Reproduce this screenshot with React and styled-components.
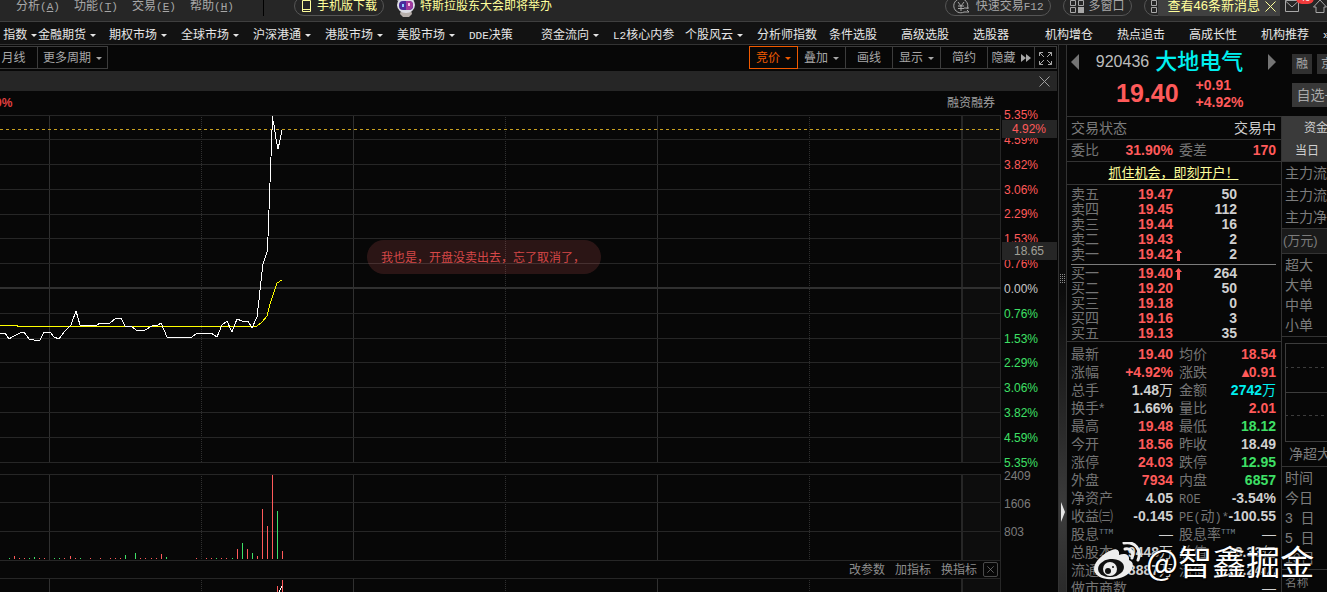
import { useState } from "react";
import styled, { createGlobalStyle } from "styled-components";

const GlobalStyle = createGlobalStyle`
  * {
    box-sizing: border-box;
  }
  body {
    margin: 0;
    background: #070707;
    color: #c8c8c8;
    font-family: "Liberation Sans", "Noto Sans CJK SC", sans-serif;
    font-size: 12px;
    line-height: 14px;
    overflow: hidden;
  }
  button {
    font: inherit;
    color: inherit;
    background: none;
    border: none;
    padding: 0;
    cursor: pointer;
    white-space: nowrap;
  }
  a {
    color: inherit;
    text-decoration: none;
  }
  svg {
    display: block;
    flex: none;
  }
`;

const red = "#ff5a5a";
const green = "#3ee066";
const cyan = "#00f0f0";
const line = "#333333";

const Page = styled.div`
  height: 100vh;
  display: flex;
  flex-direction: column;
  overflow: hidden;
`;

/* top menu */

const TopBar = styled.header`
  flex: none;
  height: 22px;
  display: flex;
  align-items: flex-end;
  justify-content: space-between;
  padding-bottom: 5px;
  background: #262626;
  border-bottom: 1px solid #3f3f3f;
  overflow: hidden;
`;

const TopGroup = styled.div`
  display: flex;
  align-items: center;
  height: 20px;
`;

const MenuButton = styled.button`
  width: 58px;
  height: 18px;
  padding-left: 16px;
  text-align: left;
  color: #a8a8a8;
`;

const Latin = styled.span`
  font-family: "Liberation Mono", monospace;
  font-size: ${(p) => p.$size || 11}px;
  line-height: 0;
`;

const MenuLine = styled.span`
  width: 1px;
  height: 20px;
  margin: 0 30px 0 31px;
  background: #000;
`;

const Pill = styled.button`
  height: 20px;
  display: flex;
  align-items: center;
  gap: 5px;
  padding: 0 6px;
  margin-right: 12px;
  border: 1px solid #555;
  border-radius: 10px;
  color: ${(p) => (p.$hot ? "#ffff9c" : "#a8a8a8")};
`;

const NewsLink = styled.a`
  display: flex;
  align-items: center;
  gap: 4px;
  color: #ffff9c;
`;

const Notice = styled.div`
  height: 20px;
  display: flex;
  align-items: center;
  gap: 5px;
  padding: 0 4px 0 10px;
  margin-left: -26px;
  background: #404040;
  color: #ffff9c;
  font-size: 13px;
  white-space: nowrap;
  z-index: 1;
`;

const IconButton = styled.button`
  position: relative;
  margin-left: ${(p) => p.$gap || 0}px;
`;

const Badge = styled.span`
  position: absolute;
  left: 11px;
  top: -8px;
  padding: 0 4px;
  border-radius: 6px;
  background: #f03c3c;
  color: #fff;
  font-size: 9px;
  line-height: 12px;
`;

/* navigation */

const Nav = styled.nav`
  flex: none;
  height: 23px;
  display: flex;
  align-items: center;
  padding-top: 4px;
  background: #121212;
  border-bottom: 1px solid ${line};
  color: #e6e6e6;
  overflow: hidden;
`;

const NavItem = styled.a`
  flex: none;
  width: ${(p) => p.$width || 72}px;
  display: flex;
  align-items: center;
  gap: 4px;
  white-space: nowrap;
`;

const Caret = styled.span`
  border: 3px solid transparent;
  border-top-color: currentColor;
  border-bottom: none;
`;

/* body */

const Body = styled.div`
  flex: 1;
  min-height: 0;
  display: flex;
`;

const Main = styled.main`
  flex: 1;
  min-width: 0;
  display: flex;
  flex-direction: column;
`;

const Toolbar = styled.div`
  flex: none;
  display: flex;
  justify-content: space-between;
  padding: 1px 0 2px;
`;

const ToolGroup = styled.div`
  display: flex;
`;

const Tool = styled.button`
  width: ${(p) => p.$width || 47}px;
  height: 23px;
  display: flex;
  align-items: center;
  justify-content: center;
  gap: 5px;
  padding-top: 1px;
  border: 1px solid ${(p) => (p.$active ? "#f05a00" : "#3c3c3c")};
  border-left-width: ${(p) => (p.$active ? 1 : 0)}px;
  color: ${(p) => (p.$active ? "#f05a00" : "#a8a8a8")};
`;

const Band = styled.div`
  flex: none;
  height: 20px;
  display: flex;
  align-items: center;
  justify-content: flex-end;
  padding-right: 7px;
  background: #262626;
  color: #a0a0a0;
`;

const Legend = styled.div`
  flex: none;
  height: 24px;
  display: flex;
  align-items: center;
  justify-content: space-between;
  padding-right: 62px;
  color: #a0a0a0;
`;

const Change = styled.span`
  margin-left: -5px;
  font-weight: bold;
  color: #e04040;
`;

const ChartRow = styled.section`
  flex: none;
  display: grid;
  grid-template-columns: 1fr 56px;
  margin-bottom: ${(p) => p.$gap || 0}px;
  position: relative;
`;

const Plot = styled.svg`
  width: 100%;
  height: ${(p) => p.$height}px;
  shape-rendering: crispEdges;
`;

const Axis = styled.div`
  display: flex;
  flex-direction: column;
  justify-content: space-between;
  margin: -7px 0;
  padding-left: 3px;
`;

const VolumeAxis = styled(Axis)`
  justify-content: flex-start;
  gap: 14px;
  margin: -5px 0 0;
  color: #7c7c7c;
`;

const Tick = styled.span`
  color: ${(p) => p.$color};
`;

const AxisTag = styled.span`
  position: absolute;
  right: 0;
  top: ${(p) => p.$top}px;
  width: 55px;
  padding-left: ${(p) => p.$indent}px;
  line-height: 18px;
  background: #262626;
  color: ${(p) => p.$color};
`;

const Comment = styled.div`
  position: absolute;
  left: 367px;
  top: 125px;
  padding: 11px 14px 9px;
  width: 234px;
  border-radius: 17px;
  background: rgba(255, 110, 110, 0.15);
  color: #d64848;
  white-space: nowrap;
`;

const IndicatorBar = styled.div`
  flex: none;
  height: 17px;
  display: flex;
  align-items: center;
  justify-content: flex-end;
  gap: 10px;
  margin-right: 56px;
  padding-right: 2px;
  border-right: 1px solid #262626;
  color: #8c8c8c;
`;

const Box = styled.button`
  width: 15px;
  height: 15px;
  display: grid;
  place-items: center;
  margin-left: -4px;
  border: 1px solid #4a4a4a;
  border-radius: 2px;
`;

/* splitter between chart and quotes */

const Splitter = styled.div`
  flex: none;
  width: 9px;
  margin-left: 1px;
  padding-top: 229px;
  display: flex;
  flex-direction: column;
  align-items: center;
  gap: 219px;
  border: solid ${line};
  border-width: 0 1px;
  color: #8c8c8c;
  background: linear-gradient(#0c0c0c 45%, #3c3c3c 85%, #2a2a2a);
`;

const SplitArrow = styled.span`
  border: 10px solid transparent;
  border-left: 4px solid #e6e6e6;
  border-right: none;
`;

const Side = styled.aside`
  flex: none;
  width: 260px;
  display: flex;
  flex-direction: column;
  position: relative;
  overflow: hidden;
`;

const StockHead = styled.div`
  flex: none;
  height: 71px;
  display: flex;
  padding-left: 4px;
`;

const StockInfo = styled.div`
  flex: none;
  width: 205px;
  padding-top: 4px;
`;

const StockTitle = styled.div`
  height: 26px;
  display: flex;
  align-items: center;
  justify-content: space-between;
  color: #747474;
`;

const Name = styled.h1`
  margin: 0;
  padding-right: 8px;
  display: flex;
  align-items: center;
  gap: 6px;
  color: ${cyan};
  font-size: 22px;
  font-weight: 500;
  line-height: 26px;
`;

const Code = styled.span`
  color: #bdbdbd;
  font-size: 16px;
  font-weight: normal;
`;

const PriceRow = styled.div`
  display: flex;
  align-items: center;
  gap: 17px;
  padding-left: 45px;
  color: ${red};
`;

const Price = styled.strong`
  font-size: 25px;
  font-weight: bold;
  line-height: 28px;
`;

const Delta = styled.div`
  padding-top: 2px;
  font-size: 14px;
  font-weight: bold;
  line-height: 17px;
`;

const Tags = styled.div`
  display: grid;
  grid-template-columns: 20px 20px;
  gap: 9px 5px;
  align-content: start;
  padding: 9px 0 0 16px;
`;

const Tag = styled.button`
  height: 20px;
  background: #303030;
  color: #a8a8a8;
`;

const WatchButton = styled(Tag)`
  grid-column: span 2;
  height: 24px;
  background: #383838;
  font-size: 14px;
`;

const Panels = styled.div`
  flex: 1;
  display: flex;
  align-items: stretch;
`;

const Quote = styled.section`
  flex: none;
  width: 214px;
  border-top: 1px solid ${line};
`;

const StatusRow = styled.div`
  display: flex;
  align-items: center;
  justify-content: space-between;
  height: 23px;
  padding: 0 5px 0 4px;
  border-bottom: 1px solid ${line};
  color: #7c7c7c;
  font-size: 14px;
`;

const State = styled.span`
  color: #d0d0d0;
`;

const RatioRow = styled.div`
  border-bottom: 1px solid ${line};
`;

const Promo = styled.a`
  margin: 0 auto;
  color: #ffff9c;
  font-size: 13px;
  text-decoration: underline;
  text-underline-offset: 2px;
`;

const Num = styled.span`
  color: ${(p) => p.$color || "#d0d0d0"};
  font-weight: bold;
`;

const Unit = styled.span`
  font-weight: normal;
`;

const QuoteTable = styled.table`
  width: 205px;
  margin-left: 4px;
  table-layout: fixed;
  border-collapse: collapse;
  font-size: 14px;

  th,
  td {
    height: ${(p) => p.$row}px;
    line-height: ${(p) => p.$row}px;
    padding: 0;
    white-space: nowrap;
    text-align: right;
  }
  th {
    color: #747474;
    font-weight: normal;
    text-align: left;
  }
  td svg {
    margin-left: 2px;
  }
  th + td + th {
    padding-left: 6px;
  }
`;

const Book = styled.div`
  padding: 2px 0 0;
  border-bottom: 1px solid ${line};
`;

const BookLine = styled.hr`
  margin: 2px 5px 1px 4px;
  border: none;
  border-top: 1px solid #7c7c7c;
`;

const Details = styled.div`
  padding-top: 3px;
`;

const Ttm = styled.sup`
  position: relative;
  top: -5px;
  color: #6f8090;
  font-family: "Liberation Mono", monospace;
  font-size: 8px;
  line-height: 0;
  vertical-align: baseline;
`;

const Fund = styled.section`
  flex: 1;
  min-width: 0;
  border-left: 1px solid ${line};
  color: #7c7c7c;
  font-size: 14px;
  overflow: hidden;
  white-space: nowrap;
`;

const FundTabs = styled.div`
  display: grid;
  grid-template-rows: 24px 21px;
  justify-items: start;
  background: #3a3a3a;
  color: #d0d0d0;
  font-size: 12px;
`;

const FundTab = styled.button`
  margin-left: ${(p) => p.$indent}px;
`;

const FundList = styled.div`
  padding: ${(p) => p.$pad || 0}px 0 ${(p) => p.$pad || 0}px 3px;
  line-height: ${(p) => p.$row || 20}px;
  border-top: 1px solid ${line};
`;

const FundUnit = styled.div`
  padding-left: 1px;
  line-height: 24px;
  font-size: 13px;
  background: #1a1a1a;
  border-top: 1px solid ${line};
`;

const MiniChart = styled.svg`
  margin-top: 6px;
  shape-rendering: crispEdges;
`;

const FundCaption = styled.div`
  padding-left: 7px;
  line-height: 24px;
`;

const Watermark = styled.div`
  position: absolute;
  left: 27px;
  top: 494px;
  display: flex;
  align-items: center;
  gap: 5px;
  color: #fff;
  font-family: "Noto Sans CJK SC", sans-serif;
  font-size: 34px;
  line-height: 44px;
  text-shadow: 0 0 2px #000, 1px 1px 1px #000;
  white-space: nowrap;
`;

const Cross = ({ size = 11 }) => (
  <svg width={size} height={size} viewBox="0 0 11 11" stroke="currentColor">
    <path d="M.5.5l10 10M10.5.5l-10 10" />
  </svg>
);

const UpArrow = () => (
  <svg width="7" height="12" viewBox="0 0 7 12" fill={red}>
    <path d="M3.5 0L7 4H5v8H2V4H0z" />
  </svg>
);

const Grid4 = () => (
  <svg width="14" height="13" viewBox="0 0 14 13" fill="none" stroke="currentColor">
    <path d="M.5.5h5v5h-5zM8.5.5h5v5h-5zM.5 7.5h5v5h-5z" />
    <path d="M8 7h6v6H8z" fill="currentColor" stroke="none" />
  </svg>
);

const Robot = () => (
  <svg width="20" height="22" viewBox="0 0 20 22">
    <path d="M3 8L1 5l3-2 4 1 6-2 4 2-1 4z" fill="#a9a9b4" />
    <path d="M5 15h10l1 4-3 3H7l-3-3z" fill="#b8b0ac" />
    <ellipse cx="10" cy="10" rx="9" ry="8" fill="#dedee6" />
    <rect x="3" y="6" width="14" height="9" rx="4" fill="#4a2c9c" />
    <path d="M10 6h3q4 0 4 4t-4 5h-3z" fill="#a03a9c" />
    <rect x="6" y="9" width="2" height="3" fill="#8fd0ff" />
    <rect x="12" y="8" width="2" height="3" fill="#ffc0e8" />
  </svg>
);

const navItems = [
  ["金融期货", true, 71],
  ["期权市场", true],
  ["全球市场", true],
  ["沪深港通", true],
  ["港股市场", true],
  ["美股市场", true],
  ["决策", false, 72, "DDE"],
  ["资金流向", true],
  ["核心内参", false, 72, "L2"],
  ["个股风云", true],
  ["分析师指数"],
  ["条件选股"],
  ["高级选股"],
  ["选股器"],
  ["机构增仓"],
  ["热点追击"],
  ["高成长性"],
  ["机构推荐", false, 62],
  ["»"],
];

const ticks = [5.35, 4.59, 3.82, 3.06, 2.29, 1.53, 0.76, 0, -0.76, -1.53, -2.29, -3.06, -3.82, -4.59, -5.35];
const gridY = [0, 24, 49, 74, 99, 123, 148, 198, 223, 247, 272, 297, 322, 347];

const priceLine =
  "0,218 5,218 9,224 14,221 20,218 24,217 29,224 34,225 40,225 44,217 50,217 54,222 59,224 65,216 71,210 76,196 80,210 97,210 100,208 110,208 116,203 121,203 125,211 131,211 136,215 145,215 152,211 158,210 161,208 167,222 192,222 197,218 211,218 217,222 222,210 227,206 232,217 237,204 242,206 248,206 252,213 257,202 259,185 261,166 263,149 267,137 268,122 269,95 270,68 271,42 272,15 272,1 274,10 276,24 278,34 280,25 282,15";
const averageLine = "0,210 17,210 17,211 257,211 262,207 267,201 270,189 274,177 277,168 282,165";

// [x, height, rising]
const volumes = [
  [9, 1, 0], [14, 3, 1], [19, 1, 1], [24, 1, 1], [29, 1, 0], [34, 2, 0], [39, 1, 1], [44, 1, 1],
  [54, 1, 0], [59, 1, 0], [64, 1, 1], [70, 3, 1], [75, 1, 1], [80, 1, 0], [90, 1, 1], [100, 1, 1],
  [110, 1, 1], [115, 1, 1], [120, 1, 1], [125, 4, 0], [135, 6, 0], [140, 1, 1], [145, 1, 1], [151, 1, 1],
  [156, 1, 1], [161, 5, 1], [166, 2, 0], [196, 1, 1], [206, 1, 1], [211, 1, 1], [216, 1, 0], [221, 1, 1],
  [226, 1, 1], [232, 1, 0], [237, 10, 1], [242, 16, 0], [247, 10, 1], [252, 6, 0], [257, 3, 1],
  [262, 50, 1], [267, 33, 1], [272, 84, 1], [277, 48, 0], [282, 8, 1],
];

const sells = [
  ["卖五", "19.47", 50],
  ["卖四", "19.45", 112],
  ["卖三", "19.44", 16],
  ["卖二", "19.43", 2],
  ["卖一", "19.42", 2, true],
];
const buys = [
  ["买一", "19.40", 264, true],
  ["买二", "19.20", 50],
  ["买三", "19.18", 0],
  ["买四", "19.16", 3],
  ["买五", "19.13", 35],
];

const ttm = <Ttm>TTM</Ttm>;
const dash = <Unit>—</Unit>;
const ratio = [["委比", "31.90%", red, "委差", "170", red]];
const details = [
  ["最新", "19.40", red, "均价", "18.54", red],
  ["涨幅", "+4.92%", red, "涨跌", "▴0.91", red],
  ["总手", <>1.48<Unit>万</Unit></>, null, "金额", <>2742<Unit>万</Unit></>, cyan],
  ["换手*", "1.66%", null, "量比", "2.01", red],
  ["最高", "19.48", red, "最低", "18.12", green],
  ["今开", "18.56", red, "昨收", "18.49", null],
  ["涨停", "24.03", red, "跌停", "12.95", green],
  ["外盘", "7934", red, "内盘", "6857", green],
  ["净资产", "4.05", null, <Latin $size={12}>ROE</Latin>, "-3.54%", null],
  [
    "收益㈢", "-0.145", null,
    <><Latin $size={12}>PE(</Latin>动<Latin $size={12}>)*</Latin></>, "-100.55", null,
  ],
  [<>股息{ttm}</>, dash, null, <>股息率{ttm}</>, dash, null],
  ["总股本", <>9448<Unit>万</Unit></>, null, "总值", <>18.33<Unit>亿</Unit></>, null],
  ["流通股", <>8887<Unit>万</Unit></>, null, "流值", <>17.24<Unit>亿</Unit></>, null],
  ["做市商数", "", null, "", dash, null],
];

const Verticals = ({ height }) => (
  <>
    <rect x="962" width="39" height={height} fill="#0d0d0d" />
    {[49, 353, 657].map((x) => (
      <rect key={x} x={x} width="1" height={height} fill="#303030" />
    ))}
    {[201, 505, 809].map((x) => (
      <path key={x} d={`M${x}.5 0V${height}`} stroke="#303030" strokeDasharray="1 1" />
    ))}
    <rect x="961" width="2" height={height} fill="#262626" />
    <rect x="1000" width="1" height={height} fill="#262626" />
  </>
);

const BookTable = ({ rows }) => (
  <QuoteTable $row={15}>
    <colgroup>
      <col width="62" />
      <col width="40" />
      <col width="10" />
      <col width="54" />
      <col width="39" />
    </colgroup>
    <tbody>
      {rows.map(([label, price, amount, up]) => (
        <tr key={label}>
          <th scope="row">{label}</th>
          <td><Num $color={red}>{price}</Num></td>
          <td>{up && <UpArrow />}</td>
          <td><Num>{amount}</Num></td>
          <td />
        </tr>
      ))}
    </tbody>
  </QuoteTable>
);

const PairTable = ({ rows, row }) => (
  <QuoteTable $row={row}>
    <colgroup>
      <col width="48" />
      <col width="54" />
      <col width="51" />
      <col width="52" />
    </colgroup>
    <tbody>
      {rows.map(([l1, v1, c1, l2, v2, c2], i) => (
        <tr key={i}>
          <th scope="row">{l1}</th>
          <td><Num $color={c1}>{v1}</Num></td>
          <th scope="row">{l2}</th>
          <td><Num $color={c2}>{v2}</Num></td>
        </tr>
      ))}
    </tbody>
  </QuoteTable>
);

const App = () => {
  const [notice, setNotice] = useState(true);

  return (
    <Page>
      <GlobalStyle />
      <TopBar>
        <TopGroup>
          {[["分析", "A"], ["功能", "T"], ["交易", "E"], ["帮助", "H"]].map(([text, key]) => (
            <MenuButton key={key}>
              {text}<Latin>(<u>{key}</u>)</Latin>
            </MenuButton>
          ))}
          <MenuLine />
          <Pill $hot>
            <svg width="11" height="12" viewBox="0 0 11 12" fill="none" stroke="currentColor">
              <path d="M1.500.5h8v11h-8zM1.500 9.500h8" />
            </svg>
            手机版下载
          </Pill>
          <NewsLink href="#news">
            <Robot />
            特斯拉股东大会即将举办
          </NewsLink>
        </TopGroup>
        <TopGroup>
          <Pill>
            <svg width="19" height="16" viewBox="0 0 19 16" fill="none" stroke="currentColor">
              <path d="M12 14a7 7 0 1 1 3-3M6 4l3 4 3-4M6 8h6M6 10.500h6M9 8v5M12 14h5l-2-2M17 10h-5" />
            </svg>
            <span>快速交易<Latin>F12</Latin></span>
          </Pill>
          <Pill><Grid4 />多窗口</Pill>
          <Pill aria-label="布局"><Grid4 /></Pill>
          {notice && (
            <Notice>
              查看46条新消息
              <IconButton aria-label="关闭" onClick={() => setNotice(false)}><Cross /></IconButton>
            </Notice>
          )}
          <IconButton $gap={5} aria-label="消息">
            <svg width="14" height="12" viewBox="0 0 14 12" fill="none" stroke="#a8a8a8">
              <path d="M.5.5h13v11H.5zM.5 1L7 7l6.500-6" />
            </svg>
            <Badge>46</Badge>
          </IconButton>
          <IconButton $gap={14} aria-label="主页">
            <svg width="14" height="14" viewBox="0 0 14 14" fill="none" stroke="#a8a8a8">
              <path d="M.5 8L7 1l6.500 7H11v5.500H3V8z" />
            </svg>
          </IconButton>
        </TopGroup>
      </TopBar>

      <Nav>
        <NavItem href="#" $width={38}>
          <span>&nbsp;指数</span><Caret />
        </NavItem>
        {navItems.map(([text, menu, width, latin]) => (
          <NavItem href="#" key={text} $width={width}>
            <span>{latin && <Latin>{latin}</Latin>}{text}</span>
            {menu && <Caret />}
          </NavItem>
        ))}
      </Nav>

      <Body>
        <Main>
          <Toolbar>
            <ToolGroup>
              <Tool $width={38}>月线&nbsp;&nbsp;&nbsp;</Tool>
              <Tool $width={70}>更多周期 <Caret /></Tool>
            </ToolGroup>
            <ToolGroup>
              <Tool $active $width={49}>竞价<Caret /></Tool>
              <Tool $width={48}>叠加<Caret /></Tool>
              <Tool>画线</Tool>
              <Tool $width={48}>显示<Caret /></Tool>
              <Tool>简约</Tool>
              <Tool>
                隐藏
                <svg width="10" height="8" viewBox="0 0 10 8" fill="currentColor">
                  <path d="M0 0l5 4-5 4zM5 0l5 4-5 4z" />
                </svg>
              </Tool>
              <Tool $width={22} aria-label="全屏">
                <svg width="13" height="13" viewBox="0 0 13 13" fill="none" stroke="currentColor">
                  <path d="M.5 4V.5H4M9 .5h3.500V4M12.500 9v3.500H9M4 12.500H.5V9M.5.5L5 5M12.500.5L8 5M12.500 12.500L8 8M.5 12.500L5 8" />
                </svg>
              </Tool>
            </ToolGroup>
          </Toolbar>
          <Band>
            <IconButton aria-label="关闭"><Cross /></IconButton>
          </Band>
          <Legend>
            <Change>0%</Change>
            <span>融资融券</span>
          </Legend>

          <ChartRow $gap={11}>
            <Plot $height={348} viewBox="0 0 1001 348" preserveAspectRatio="none">
              <Verticals height={348} />
              {gridY.map((y) => (
                <rect key={y} y={y} width="1001" height="1" fill="#262626" />
              ))}
              <rect y="172" width="1001" height="2" fill="#303030" />
              <path d="M0 14.500H1000" stroke="#c8a020" strokeDasharray="3 3" />
              <polyline points={averageLine} fill="none" stroke="#ffff00" />
              <polyline points={priceLine} fill="none" stroke="#ffffff" />
            </Plot>
            <Axis>
              {ticks.map((t) => (
                <Tick key={t} $color={t > 0 ? red : t < 0 ? green : "#c8c8c8"}>
                  {Math.abs(t).toFixed(2)}%
                </Tick>
              ))}
            </Axis>
            <AxisTag $top={5} $indent={10} $color={red}>4.92%</AxisTag>
            <AxisTag $top={127} $indent={12} $color="#a0a098">18.65</AxisTag>
            <Comment>我也是，开盘没卖出去，忘了取消了，</Comment>
          </ChartRow>

          <ChartRow>
            <Plot $height={87} viewBox="0 0 1001 87" preserveAspectRatio="none">
              <Verticals height={87} />
              {[0, 28, 57, 86].map((y) => (
                <rect key={y} y={y} width="1001" height="1" fill="#262626" />
              ))}
              {volumes.map(([x, h, up]) => (
                <rect key={x} x={x} y={85 - h} width="1" height={h} fill={up ? red : green} />
              ))}
            </Plot>
            <VolumeAxis>
              <span>2409</span>
              <span>1606</span>
              <span>803</span>
            </VolumeAxis>
          </ChartRow>

          <IndicatorBar>
            <button>改参数</button>
            <button>加指标</button>
            <button>换指标</button>
            <Box aria-label="关闭"><Cross size={7} /></Box>
          </IndicatorBar>

          <ChartRow>
            <Plot $height={14} viewBox="0 0 1001 14" preserveAspectRatio="none">
              <Verticals height={14} />
              <rect width="1001" height="1" fill="#262626" />
              <rect x="277" y="8" width="1" height="6" fill={red} />
              <rect x="282" y="2" width="1" height="12" fill={red} />
              <path d="M279 14l3-6" stroke="#fff" />
            </Plot>
          </ChartRow>
        </Main>

        <Splitter>
          <svg width="5" height="9" viewBox="0 0 5 9" fill="currentColor">
            {[0, 2, 4, 6, 8].map((y) => (
              <path key={y} d={`M0 ${y}h1v1H0zM2 ${y}h1v1H2zM4 ${y}h1v1H4z`} />
            ))}
          </svg>
          <SplitArrow />
        </Splitter>

        <Side>
          <StockHead>
            <StockInfo>
              <StockTitle>
                <button aria-label="上一只">
                  <svg width="8" height="16" fill="currentColor"><path d="M8 0v16L0 8z" /></svg>
                </button>
                <Name><Code>920436</Code>大地电气</Name>
                <button aria-label="下一只">
                  <svg width="8" height="16" fill="currentColor"><path d="M0 0v16l8-8z" /></svg>
                </button>
              </StockTitle>
              <PriceRow>
                <Price>19.40</Price>
                <Delta>+0.91<br />+4.92%</Delta>
              </PriceRow>
            </StockInfo>
            <Tags>
              <Tag>融</Tag>
              <Tag>京</Tag>
              <WatchButton>自选+</WatchButton>
            </Tags>
          </StockHead>

          <Panels>
            <Quote>
              <StatusRow>
                <span>交易状态</span>
                <State>交易中</State>
              </StatusRow>
              <RatioRow>
                <PairTable rows={ratio} row={21} />
              </RatioRow>
              <StatusRow>
                <Promo href="#open">抓住机会，即刻开户！</Promo>
              </StatusRow>
              <Book>
                <BookTable rows={sells} />
                <BookLine />
                <BookTable rows={buys} />
              </Book>
              <Details>
                <PairTable rows={details} row={18} />
              </Details>
            </Quote>

            <Fund>
              <FundTabs>
                <FundTab $indent={22}>资金</FundTab>
                <FundTab $indent={13}>当日</FundTab>
              </FundTabs>
              <FundList $row={22}>主力流入<br />主力流出<br />主力净额</FundList>
              <FundUnit>(万元)</FundUnit>
              <FundList $pad={1}>超大<br />大单<br />中单<br />小单</FundList>
              <FundList>
                <MiniChart width="60" height="99" fill="none" stroke="#3c3c3c">
                  <path d="M.5.5h70v98H.5zM0 49.500h60" />
                  <path d="M0 24.500h60M0 72.500h60" strokeDasharray="3 3" />
                </MiniChart>
              </FundList>
              <FundCaption>净超大单</FundCaption>
              <FundList $pad={1}>时间<br />今日<br />3&nbsp;&nbsp;日<br />5&nbsp;&nbsp;日<br />10日</FundList>
              <FundList $row={24}><small>名称</small></FundList>
            </Fund>
          </Panels>

          <Watermark>
            <svg width="47" height="38" viewBox="0 0 47 38">
              <path
                d="M18 8c4-2 8 0 7 5 5-2 11-1 10 5 5 2 5 7 1 12-5 6-15 8-23 7C5 36 0 32 0 27 0 19 10 11 18 8z"
                fill="#eee"
              />
              <ellipse cx="17" cy="26" rx="13" ry="9" transform="rotate(-8 17 26)" fill="#111" />
              <circle cx="16" cy="27" r="7" fill="#eee" />
              <circle cx="14" cy="29" r="3" fill="#111" />
              <circle cx="19" cy="25" r="1" fill="#111" />
              <path d="M31 7c6-1 9 3 7 9M30 1c11-2 18 7 14 17" fill="none" stroke="#eee" strokeWidth="3" strokeLinecap="round" />
            </svg>
            @智鑫掘金
          </Watermark>
        </Side>
      </Body>
    </Page>
  );
};

export default App;
